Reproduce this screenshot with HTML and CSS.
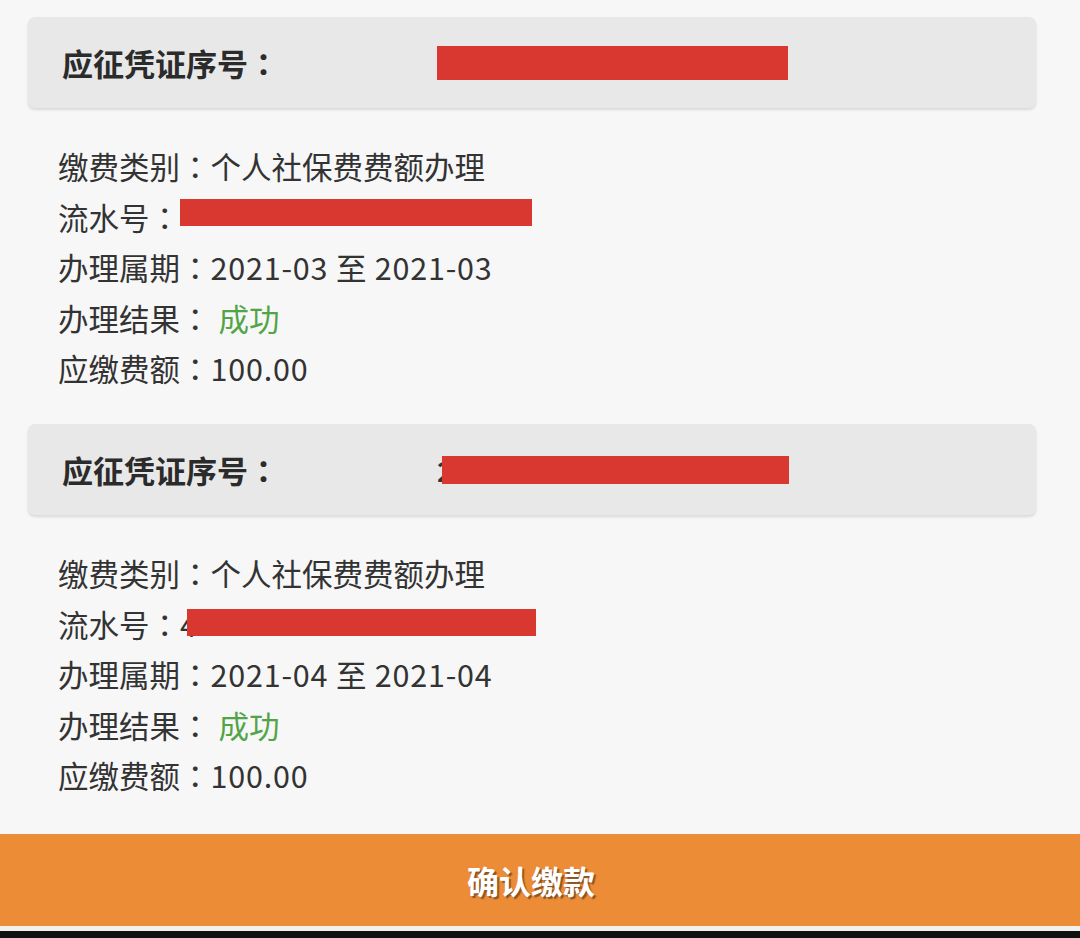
FILE: index.html
```html
<html>
  <head>
    <title>缴款确认</title>
    <link rel="stylesheet" href="styles.css">
  </head>
  <body>
    <div class="list">
      <div class="voucher">
        <div class="head">
          <span class="label">应征凭证序号<span class="colon">：</span></span><span class="mask head-mask"></span>
        </div>
        <div class="info">
          <div class="row">缴费类别<span class="colon">：</span>个人社保费费额办理</div>
          <div class="row">流水号<span class="colon">：</span><span class="mask row-mask"></span></div>
          <div class="row">办理属期<span class="colon">：</span><span class="num">2021-03 至 2021-03</span></div>
          <div class="row">办理结果<span class="colon">：</span><span class="ok">成功</span></div>
          <div class="row">应缴费额<span class="colon">：</span><span class="num">100.00</span></div>
        </div>
      </div>

      <div class="voucher">
        <div class="head">
          <span class="label">应征凭证序号<span class="colon">：</span></span><span class="peek">2</span><span class="mask head-mask second"></span>
        </div>
        <div class="info">
          <div class="row">缴费类别<span class="colon">：</span>个人社保费费额办理</div>
          <div class="row">流水号<span class="colon">：</span><span class="peek">4</span><span class="mask row-mask second"></span></div>
          <div class="row">办理属期<span class="colon">：</span><span class="num">2021-04 至 2021-04</span></div>
          <div class="row">办理结果<span class="colon">：</span><span class="ok">成功</span></div>
          <div class="row">应缴费额<span class="colon">：</span><span class="num">100.00</span></div>
        </div>
      </div>
    </div>

    <div class="submit">确认缴款</div>
    <div class="edge"></div>
  </body>
</html>
```

FILE: styles.css
```css
body {
  margin: 0;
  background: #f7f7f7;
  color: #333;
  font-family: "Noto Sans CJK SC", "Noto Sans", sans-serif;
}
.colon {
  font-family: "Noto Sans CJK JP", sans-serif;
}
.list {
  padding-top: 17px;
  padding-left: 28px;
  height: 817px;
  box-sizing: border-box;
}
.voucher {
  width: 1008px;
  height: 407px;
}
.head {
  display: flex;
  align-items: center;
  height: 91px;
  padding-left: 34px;
  background: #e8e8e8;
  border-radius: 7px;
  box-shadow: 0 2px 3px rgba(0, 0, 0, 0.12);
  box-sizing: border-box;
}
.label {
  width: 375px;
  font-size: 31px;
  font-weight: bold;
  color: #2b2b2b;
}
.mask {
  display: inline-block;
  background: #d93831;
}
.head-mask {
  width: 351px;
  height: 34px;
}
.head-mask.second {
  width: 347px;
  height: 28px;
  margin-left: -12px;
}
.peek {
  font-weight: bold;
  font-size: 28px;
  line-height: 1;
  color: #333;
}
.info {
  padding-top: 33px;
  padding-left: 30px;
}
.row {
  display: flex;
  align-items: center;
  height: 50.5px;
  font-size: 30.5px;
  white-space: pre;
}
.num {
  letter-spacing: 0.8px;
}
.row-mask {
  width: 352px;
  height: 27px;
  margin-top: -8px;
}
.row-mask.second {
  width: 349px;
  margin-top: -2px;
  margin-left: -10px;
}
.row .peek {
  font-weight: normal;
  font-size: 30px;
}
.ok {
  margin-left: 8px;
  color: #52a447;
}
.submit {
  height: 92px;
  margin-top: 17px;
  padding-right: 18px;
  background: #ec8c37;
  color: #fff;
  font-size: 32px;
  font-weight: bold;
  text-align: center;
  line-height: 92px;
  text-shadow: 2px 2px 1px rgba(60, 40, 20, 0.55);
}
.edge {
  height: 5px;
  background: #f3f1ed;
  border-bottom: 7px solid #111;
}
```
